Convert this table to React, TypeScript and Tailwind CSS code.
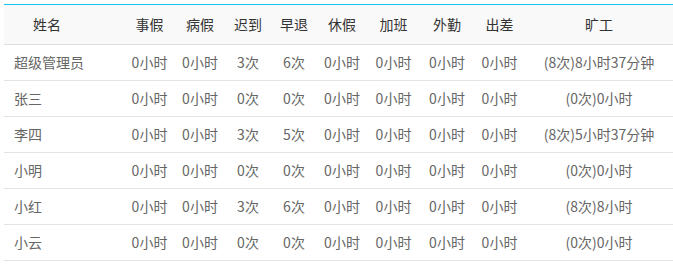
import React from "react";

const cols = "grid grid-cols-[120px_51px_50px_46px_46px_50px_53px_54px_51px_148px]";

const headers = ["事假", "病假", "迟到", "早退", "休假", "加班", "外勤", "出差", "旷工"];

const rows: string[][] = [
  ["超级管理员", "0小时", "0小时", "3次", "6次", "0小时", "0小时", "0小时", "0小时", "(8次)8小时37分钟"],
  ["张三", "0小时", "0小时", "0次", "0次", "0小时", "0小时", "0小时", "0小时", "(0次)0小时"],
  ["李四", "0小时", "0小时", "3次", "5次", "0小时", "0小时", "0小时", "0小时", "(8次)5小时37分钟"],
  ["小明", "0小时", "0小时", "0次", "0次", "0小时", "0小时", "0小时", "0小时", "(0次)0小时"],
  ["小红", "0小时", "0小时", "3次", "6次", "0小时", "0小时", "0小时", "0小时", "(8次)8小时"],
  ["小云", "0小时", "0小时", "0次", "0次", "0小时", "0小时", "0小时", "0小时", "(0次)0小时"],
];

export default function App() {
  return (
    <div
      className="bg-white w-[673px] h-[267px] pt-[4px] pl-[4px] overflow-hidden"
      style={{ fontFamily: '"Noto Sans CJK SC", "Noto Sans", sans-serif' }}
    >
      <div className="w-[669px] border-t border-[#12c4ef] text-[14px]">
        <div className={`${cols} h-[40px] bg-[#f9f9f9] border-b border-[#dedede] text-[#333] items-center`}>
          <div className="pl-[29px]">姓名</div>
          {headers.map((h) => (
            <div key={h} className="text-center">
              {h}
            </div>
          ))}
        </div>
        {rows.map((r) => (
          <div key={r[0]} className={`${cols} h-[36px] border-b border-[#e3e3e3] text-[#666] items-center`}>
            <div className="pl-[10px]">{r[0]}</div>
            {r.slice(1).map((c, i) => (
              <div key={i} className="text-center whitespace-nowrap">
                {c}
              </div>
            ))}
          </div>
        ))}
      </div>
    </div>
  );
}
